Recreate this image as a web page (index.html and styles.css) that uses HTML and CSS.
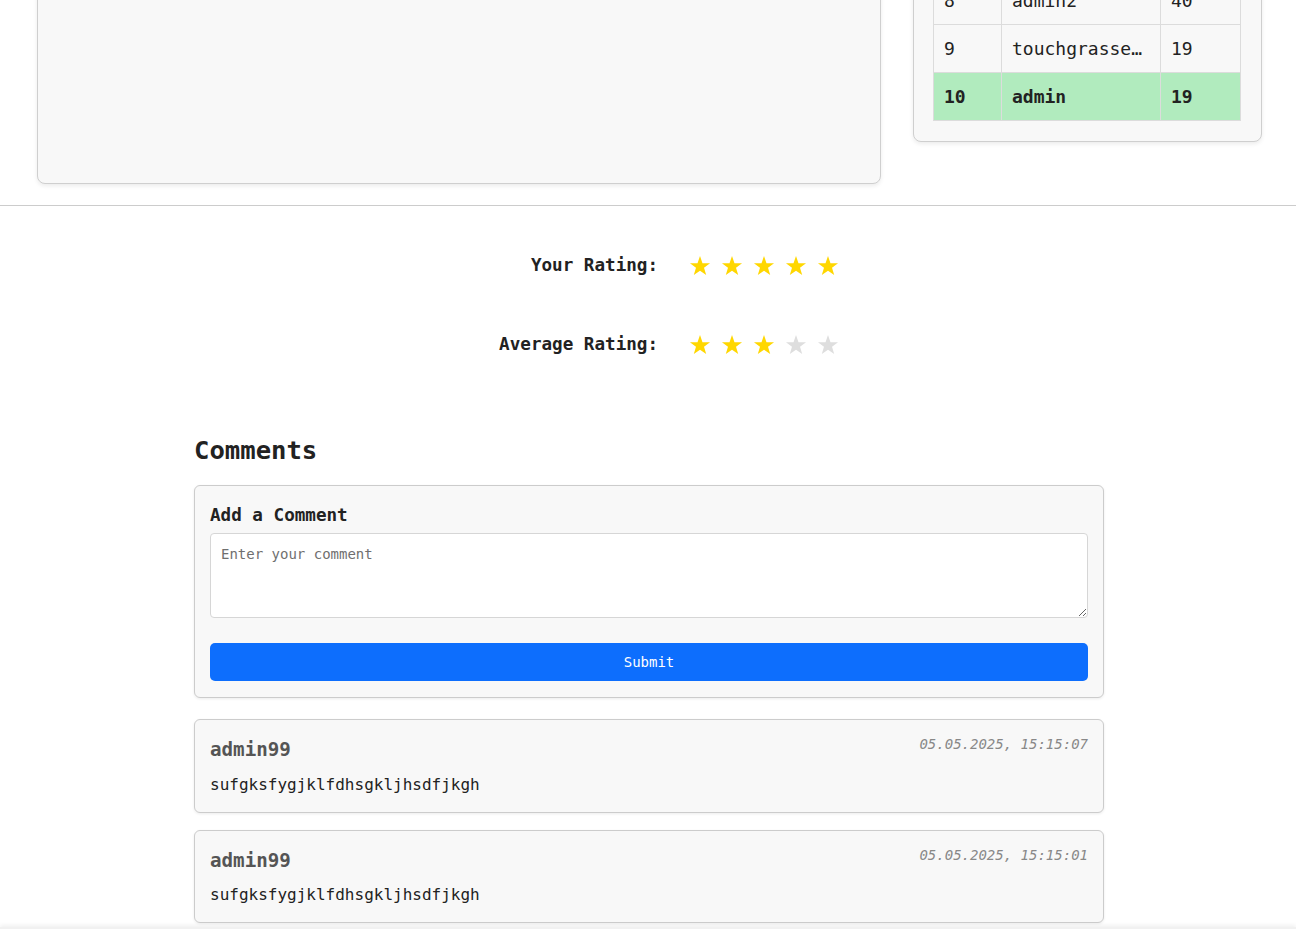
FILE: index.html
```html
<!DOCTYPE html>
<html lang="en">
<head>
<meta charset="utf-8">
<title>Game</title>
<link rel="stylesheet" href="styles.css">
</head>
<body>
<section class="top">
  <div class="card game-card"></div>
  <div class="card board-card">
    <table class="board">
      <colgroup><col class="c-rank"><col class="c-name"><col class="c-score"></colgroup>
      <tbody>
        <tr><td>8</td><td>admin2</td><td>40</td></tr>
        <tr><td>9</td><td>touchgrasser_official</td><td>19</td></tr>
        <tr class="me"><td>10</td><td>admin</td><td>19</td></tr>
      </tbody>
    </table>
  </div>
</section>

<section class="ratings">
  <div class="rating-row">
    <span class="rating-label">Your Rating:</span>
    <div class="stars">
      <svg class="star on" viewBox="0 0 24 24"><polygon points="12,1.1 14.7,8.88 22.94,9.05 16.37,14.02 18.76,21.9 12,17.2 5.24,21.9 7.63,14.02 1.06,9.05 9.3,8.88"/></svg>
      <svg class="star on" viewBox="0 0 24 24"><polygon points="12,1.1 14.7,8.88 22.94,9.05 16.37,14.02 18.76,21.9 12,17.2 5.24,21.9 7.63,14.02 1.06,9.05 9.3,8.88"/></svg>
      <svg class="star on" viewBox="0 0 24 24"><polygon points="12,1.1 14.7,8.88 22.94,9.05 16.37,14.02 18.76,21.9 12,17.2 5.24,21.9 7.63,14.02 1.06,9.05 9.3,8.88"/></svg>
      <svg class="star on" viewBox="0 0 24 24"><polygon points="12,1.1 14.7,8.88 22.94,9.05 16.37,14.02 18.76,21.9 12,17.2 5.24,21.9 7.63,14.02 1.06,9.05 9.3,8.88"/></svg>
      <svg class="star on" viewBox="0 0 24 24"><polygon points="12,1.1 14.7,8.88 22.94,9.05 16.37,14.02 18.76,21.9 12,17.2 5.24,21.9 7.63,14.02 1.06,9.05 9.3,8.88"/></svg>
    </div>
  </div>
  <div class="rating-row">
    <span class="rating-label">Average Rating:</span>
    <div class="stars">
      <svg class="star on" viewBox="0 0 24 24"><polygon points="12,1.1 14.7,8.88 22.94,9.05 16.37,14.02 18.76,21.9 12,17.2 5.24,21.9 7.63,14.02 1.06,9.05 9.3,8.88"/></svg>
      <svg class="star on" viewBox="0 0 24 24"><polygon points="12,1.1 14.7,8.88 22.94,9.05 16.37,14.02 18.76,21.9 12,17.2 5.24,21.9 7.63,14.02 1.06,9.05 9.3,8.88"/></svg>
      <svg class="star on" viewBox="0 0 24 24"><polygon points="12,1.1 14.7,8.88 22.94,9.05 16.37,14.02 18.76,21.9 12,17.2 5.24,21.9 7.63,14.02 1.06,9.05 9.3,8.88"/></svg>
      <svg class="star off" viewBox="0 0 24 24"><polygon points="12,1.1 14.7,8.88 22.94,9.05 16.37,14.02 18.76,21.9 12,17.2 5.24,21.9 7.63,14.02 1.06,9.05 9.3,8.88"/></svg>
      <svg class="star off" viewBox="0 0 24 24"><polygon points="12,1.1 14.7,8.88 22.94,9.05 16.37,14.02 18.76,21.9 12,17.2 5.24,21.9 7.63,14.02 1.06,9.05 9.3,8.88"/></svg>
    </div>
  </div>
</section>

<section class="comments">
  <h2 class="comments-title">Comments</h2>
  <form class="panel add-comment">
    <h3 class="add-title">Add a Comment</h3>
    <textarea class="comment-input" placeholder="Enter your comment"></textarea>
    <button type="button" class="submit-btn">Submit</button>
  </form>
  <article class="panel comment">
    <div class="comment-head">
      <span class="comment-author">admin99</span>
      <span class="comment-date">05.05.2025, 15:15:07</span>
    </div>
    <p class="comment-text">sufgksfygjklfdhsgkljhsdfjkgh</p>
  </article>
  <article class="panel comment">
    <div class="comment-head">
      <span class="comment-author">admin99</span>
      <span class="comment-date">05.05.2025, 15:15:01</span>
    </div>
    <p class="comment-text">sufgksfygjklfdhsgkljhsdfjkgh</p>
  </article>
</section>

<footer class="footer"></footer>
</body>
</html>
```

FILE: styles.css
```css
* { box-sizing: border-box; }

body {
  margin: 0;
  background: #fff;
  color: #222;
  font-family: "DejaVu Sans Mono", "Liberation Mono", monospace;
}

.top {
  display: flex;
  align-items: flex-start;
  gap: 32px;
  margin-top: -45px;
  padding: 0 34px 21px 37px;
}

.card {
  background: #f8f8f8;
  border: 1px solid #cfcfcf;
  border-radius: 8px;
  box-shadow: 0 2px 4px rgba(0, 0, 0, 0.08);
}

.game-card {
  flex: 1;
  height: 229px;
}

.board-card {
  width: 349px;
  padding: 20px 20px 20px 19px;
}

.board {
  width: 100%;
  table-layout: fixed;
  border-collapse: collapse;
  font-size: 18px;
  line-height: 27px;
}

.c-rank { width: 68px; }
.c-name { width: 159px; }
.c-score { width: 80px; }

.board td {
  border: 1px solid #dcdcdc;
  padding: 10px 10px;
  white-space: nowrap;
  overflow: hidden;
  text-overflow: ellipsis;
  color: #222;
}

.board tr.me td {
  background: #b1ebbe;
  font-weight: bold;
}

.ratings {
  border-top: 1px solid #cccccc;
  padding: 46px 0 46px 51px;
  display: flex;
  flex-direction: column;
  gap: 52px;
}

.rating-row {
  display: grid;
  grid-template-columns: 1fr 1fr;
  column-gap: 31px;
  align-items: center;
}

.rating-label {
  text-align: right;
  font-weight: bold;
  font-size: 17.6px;
  line-height: 27px;
  color: #222;
}

.stars {
  display: flex;
  gap: 10px;
}

.star {
  width: 22px;
  height: 22px;
  display: block;
}

.star.on { fill: #ffd700; }
.star.off { fill: #dedede; }

.comments {
  width: 910px;
  margin: 31px 0 0 calc(50% - 454px);
}

.comments-title {
  margin: 0 0 19px;
  font-size: 25.6px;
  line-height: 1.2;
  font-weight: bold;
  color: #222;
}

.panel {
  background: #f8f8f8;
  border: 1px solid #cccccc;
  border-radius: 6px;
  box-shadow: 0 1px 3px rgba(0, 0, 0, 0.08);
  padding: 15px;
}

.add-comment {
  margin: 0 0 21px;
  padding-bottom: 16px;
}

.add-title {
  margin: 0 0 3px;
  font-size: 17.6px;
  line-height: 29px;
  font-weight: bold;
  color: #222;
}

.comment-input {
  display: block;
  width: 100%;
  height: 85px;
  margin: 0;
  padding: 10px;
  border: 1px solid #d6d6d6;
  border-radius: 4px;
  background: #fff;
  font-family: "DejaVu Sans Mono", "Liberation Mono", monospace;
  font-size: 14px;
  line-height: 20px;
  color: #222;
  resize: vertical;
}

.comment-input::placeholder {
  color: #6f6f6f;
}

.submit-btn {
  display: block;
  width: 100%;
  height: 38px;
  margin-top: 25px;
  border: none;
  border-radius: 5px;
  background: #0d6efd;
  color: #fff;
  font-family: "DejaVu Sans Mono", "Liberation Mono", monospace;
  font-size: 14px;
}

.comment {
  margin-bottom: 17px;
  padding-top: 16px;
}

.comment-head {
  display: flex;
  justify-content: space-between;
  align-items: flex-start;
}

.comment-author {
  font-size: 19.2px;
  line-height: 1.5;
  font-weight: bold;
  color: #555;
}

.comment-date {
  font-size: 14px;
  line-height: 16px;
  font-style: italic;
  color: #888;
}

.comment-text {
  margin: 8px 0 0;
  font-size: 16px;
  line-height: 24px;
  color: #222;
}

.footer {
  height: 60px;
  margin-top: -13px;
  background: #f1f1f1;
  box-shadow: 0 -2px 4px rgba(0, 0, 0, 0.06);
}
```
